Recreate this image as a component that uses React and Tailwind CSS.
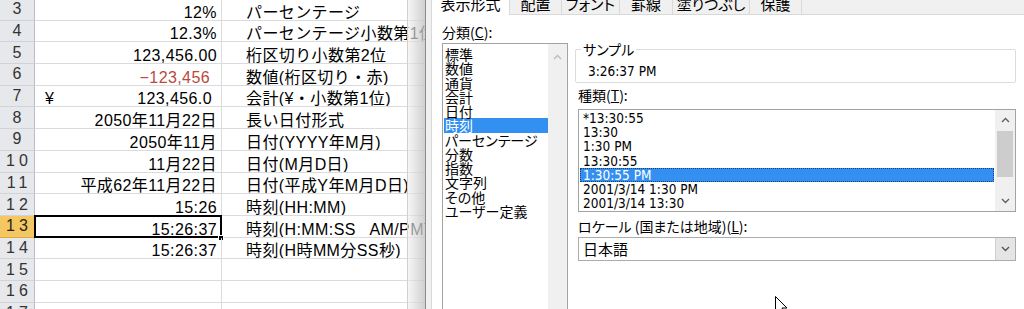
import React from "react";

const sheetRows = [
  { n: 3, a: "12%", b: "パーセンテージ" },
  { n: 4, a: "12.3%", b: "パーセンテージ小数第1位" },
  { n: 5, a: "123,456.00", b: "桁区切り小数第2位" },
  { n: 6, a: "−123,456", b: "数値(桁区切り・赤)", red: true },
  { n: 7, a: "123,456.0", b: "会計(¥・小数第1位)", yen: true },
  { n: 8, a: "2050年11月22日", b: "長い日付形式" },
  { n: 9, a: "2050年11月", b: "日付(YYYY年M月)" },
  { n: 10, a: "11月22日", b: "日付(M月D日)" },
  { n: 11, a: "平成62年11月22日", b: "日付(平成Y年M月D日)" },
  { n: 12, a: "15:26", b: "時刻(HH:MM)" },
  { n: 13, a: "15:26:37", b: "時刻(H:MM:SS   AM/PM)", sel: true },
  { n: 14, a: "15:26:37", b: "時刻(H時MM分SS秒)" },
  { n: 15, a: "", b: "" },
  { n: 16, a: "", b: "" },
  { n: 17, a: "", b: "" },
];

const categories = ["標準", "数値", "通貨", "会計", "日付", "時刻", "パーセンテージ", "分数", "指数", "文字列", "その他", "ユーザー定義"];

const types = ["*13:30:55", "13:30", "1:30 PM", "13:30:55", "1:30:55 PM", "2001/3/14 1:30 PM", "2001/3/14 13:30"];

const tabs = [
  { label: "配置", w: "w-[52px]" },
  { label: "フォント", w: "w-[58px]" },
  { label: "罫線", w: "w-[53px]" },
  { label: "塗りつぶし", w: "w-[77px]" },
  { label: "保護", w: "w-[52px]" },
];

function Chevron({ up, color = "#606060" }) {
  return (
    <svg width="9" height="6" viewBox="0 0 9 6">
      <path d={up ? "M1 5 L4.5 1.5 L8 5" : "M1 1 L4.5 4.5 L8 1"} fill="none" stroke={color} strokeWidth="1.4" />
    </svg>
  );
}

function SheetRow({ row }) {
  return (
    <div className="flex h-[21.7px]">
      <div
        className={
          row.sel
            ? "w-[35px] shrink-0 flex items-center justify-center bg-[#f5c760] border-r border-r-[#c39a3a] border-b border-b-[#e0a840] text-[#222] tracking-[4px] pl-[4px]"
            : "w-[35px] shrink-0 flex items-center justify-center bg-[#e6e8eb] border-r border-r-[#b9bcc0] border-b border-b-[#d0d3d7] text-[#333] tracking-[4px] pl-[4px]"
        }
      >
        {row.n}
      </div>
      <div className="relative w-[187px] shrink-0 flex items-end border-r border-b border-[#d9dbdd] leading-[14px]">
        {row.yen && <span className="pl-[10px]">¥</span>}
        <span
          className={
            row.red
              ? "ml-auto pr-[11px] text-[#b84a3e]"
              : row.yen
              ? "ml-auto pr-[9px]"
              : "ml-auto pr-[4px]"
          }
        >
          {row.a}
        </span>
        {row.sel && (
          <>
            <div className="absolute -left-[1px] -top-[1px] -right-[1px] -bottom-[1px] border-2 border-black" />
            <div className="absolute -right-[3px] -bottom-[4px] w-[6px] h-[6px] bg-black border border-white" />
          </>
        )}
      </div>
      <div className="flex-1 min-w-0 flex items-end border-b border-[#d9dbdd] pl-[24px] leading-[14px] whitespace-pre overflow-hidden">
        {row.b}
      </div>
    </div>
  );
}

export default function App() {
  return (
    <div className="flex w-[1024px] h-[309px] overflow-hidden bg-white text-black">
      {/* spreadsheet */}
      <div className="relative w-[425px] shrink-0 overflow-hidden font-['Liberation_Sans','Noto_Sans_CJK_JP',sans-serif] text-[16px] tracking-[0.4px]">
        <div className="-mt-[1px]">
          {sheetRows.map((r) => (
            <SheetRow key={r.n} row={r} />
          ))}
        </div>
        <div className="absolute top-0 bottom-0 right-0 w-[18px] border-l border-[#cfcfcf] bg-linear-to-r from-[#f0f0f0]/60 to-[#c4c4c4]/80" />
      </div>

      {/* format cells dialog */}
      <div className="flex-1 flex border-l border-[#8c8c8c] bg-[#f0f0f0] font-['Noto_Sans_CJK_JP',sans-serif] [font-feature-settings:'palt'] text-[14px]">
        <div className="ml-[5px] flex-1 flex flex-col">
          {/* tab strip */}
          <div className="flex h-[15px] text-[15px] leading-[15px]">
            <div className="w-[79px] h-[16px] bg-white border-l border-r border-[#d9d9d9] flex justify-center overflow-hidden">
              <span className="-mt-[4px]">表示形式</span>
            </div>
            {tabs.map((t) => (
              <div key={t.label} className={`${t.w} h-[15px] border-r border-b border-[#d9d9d9] flex justify-center overflow-hidden`}>
                <span className="-mt-[4px]">{t.label}</span>
              </div>
            ))}
            <div className="flex-1 h-[15px] border-b border-[#d9d9d9]" />
          </div>

          {/* tab page */}
          <div className="relative flex-1 flex bg-white border-l border-[#d9d9d9] pt-[8px]">
            {/* category */}
            <div className="ml-[10px] w-[126px] flex flex-col">
              <div className="leading-[18px]">
                分類(<span className="underline">C</span>):
              </div>
              <div className="mt-[2px] h-[280px] flex border border-[#a3a3a3] text-[14px]">
                <div className="flex-1 pt-[3px] pl-[1px]">
                  {categories.map((c) => (
                    <div
                      key={c}
                      className={c === "時刻" ? "h-[14.25px] leading-[14.25px] pl-[1px] bg-[#3390f0] text-white" : "h-[14.25px] leading-[14.25px] pl-[1px]"}
                    >
                      {c}
                    </div>
                  ))}
                </div>
                <div className="w-[19px] bg-[#f0f0f0] flex flex-col items-center pt-[10px]">
                  <Chevron up color="#bcbcbc" />
                </div>
              </div>
            </div>

            {/* right side */}
            <div className="ml-[10px] w-[438px] flex flex-col pt-[26px]">
              <div className="relative -ml-[3px] border border-[#dcdcdc] rounded-[2px] pt-[13px] pb-[3px] pl-[12px]">
                <span className="absolute -top-[9px] left-[5px] px-[2px] bg-white leading-[16px]">サンプル</span>
                <div className="leading-[16px] text-[13.5px] font-['DejaVu_Sans_Condensed','Liberation_Sans',sans-serif]">
                  3:26:37 PM
                </div>
              </div>

              <div className="mt-[4px] leading-[17px]">
                種類(<span className="underline">T</span>):
              </div>
              <div className="mt-[5px] h-[103px] flex border border-[#a3a3a3]">
                <div className="flex-1 pt-[1px] pl-[1px] pr-[1px] font-['DejaVu_Sans_Condensed','Liberation_Sans',sans-serif] text-[13.5px]">
                  {types.map((t, i) => (
                    <div
                      key={i}
                      className={
                        i === 4
                          ? "h-[14.2px] leading-[14.2px] pl-[3px] bg-[#3390f0] text-white outline outline-1 outline-dotted outline-[#1a3f7a] -outline-offset-1"
                          : "h-[14.2px] leading-[14.2px] pl-[3px]"
                      }
                    >
                      {t}
                    </div>
                  ))}
                </div>
                <div className="w-[20px] bg-[#f0f0f0] flex flex-col">
                  <div className="h-[20px] flex items-center justify-center">
                    <Chevron up />
                  </div>
                  <div className="mt-[1px] mx-[2px] h-[46px] bg-[#cdcdcd]" />
                  <div className="flex-1" />
                  <div className="h-[20px] flex items-center justify-center">
                    <Chevron />
                  </div>
                </div>
              </div>

              <div className="mt-[6px] leading-[17px]">
                ロケール (国または地域)(<span className="underline">L</span>):
              </div>
              <div className="mt-[2px] h-[24px] flex border border-[#acacac]">
                <div className="flex-1 flex items-center pl-[4px] text-[15px]">日本語</div>
                <div className="w-[20px] bg-[#e5e5e5] border-l border-[#d0d0d0] flex items-center justify-center">
                  <Chevron color="#555" />
                </div>
              </div>
            </div>

            {/* mouse pointer */}
            <svg className="absolute left-[343px] top-[281px]" width="13" height="21" viewBox="0 0 13 21">
              <path d="M0.5 0.5 L0.5 17 L4.5 13 L7.5 20 L10 19 L7 12 L12 12 Z" fill="white" stroke="black" strokeWidth="1" />
            </svg>
          </div>
        </div>
      </div>
    </div>
  );
}
